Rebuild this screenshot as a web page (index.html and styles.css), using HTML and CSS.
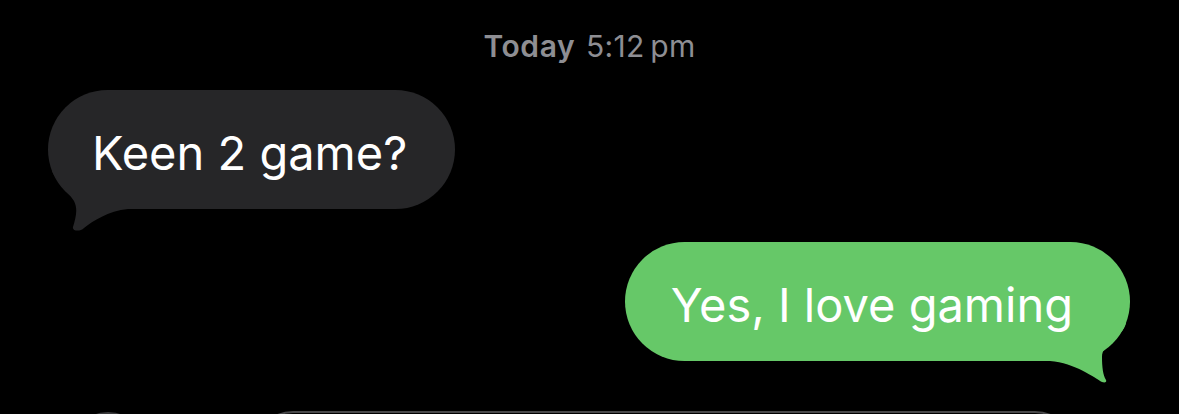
FILE: index.html
```
<!DOCTYPE html>
<html>
   <head>
      <meta charset="UTF-8" />
      <title>Mensajes</title>
      <link rel="stylesheet" href="styles.css">
   </head>
   <body>
      <div class="hilo">
         <div class="fecha"><b>Today</b> 5:12&#8201;pm</div>
         <div class="fila entra">
            <div class="burbuja gris"><span>Keen 2 game?</span>
               <svg class="cola" width="80" height="60" viewBox="0 0 80 60"><path d="M4 0 L80 0 L80 38 C60 40 45 50 36 57 C32 61 24 60 25 56 C28 46 30 38 26 30 C18 18 8 10 4 0 Z"/></svg>
            </div>
         </div>
         <div class="fila sale">
            <div class="burbuja verde"><span>Yes, I love gaming</span>
               <svg class="cola" width="80" height="60" viewBox="0 0 80 60"><path d="M0 0 L76 0 C73 14 52 20 52 34 C52 44 53 52 56 57 C57 59 55 60 52 59 C45 55 25 40 0 38 Z"/></svg>
            </div>
         </div>
         <div class="barra">
            <div class="mas"></div>
            <div class="campo"></div>
         </div>
      </div>
   </body>
</html>
```
FILE: styles.css
```
body { margin:0; background:#000; font-family:Inter,'Liberation Sans',sans-serif; color:#fff; overflow:hidden; }
.hilo { display:flex; flex-direction:column; }
.fecha { text-align:center; font-size:30px; color:#8e8e93; padding-top:28px; letter-spacing:.3px; }
.fecha b { font-weight:600; margin-right:2px; letter-spacing:.6px; }
.fila { display:flex; }
.fila.entra { justify-content:flex-start; padding-left:48px; margin-top:26px; }
.fila.sale { justify-content:flex-end; padding-right:49px; margin-top:33px; }
.burbuja { position:relative; height:119px; box-sizing:border-box; padding-top:5px; display:flex; align-items:center; border-radius:60px; font-size:47px; white-space:nowrap; }
.burbuja span { position:relative; z-index:1; }
.gris { background:#262628; padding-left:44px; padding-right:48px; }
.verde { background:#66c868; padding-left:46px; padding-right:57px; }
.cola { position:absolute; bottom:-22px; }
.gris .cola { left:0; fill:#262628; }
.verde .cola { right:0; fill:#66c868; }
.barra { display:flex; align-items:flex-start; margin-top:51px; padding-left:68px; gap:105px; }
.mas { width:80px; height:80px; border-radius:50%; background:#3a3a3c; flex:none; }
.campo { width:822px; height:80px; border:2px solid #48484a; border-radius:40px; box-sizing:border-box; margin-top:-1px; }
```
